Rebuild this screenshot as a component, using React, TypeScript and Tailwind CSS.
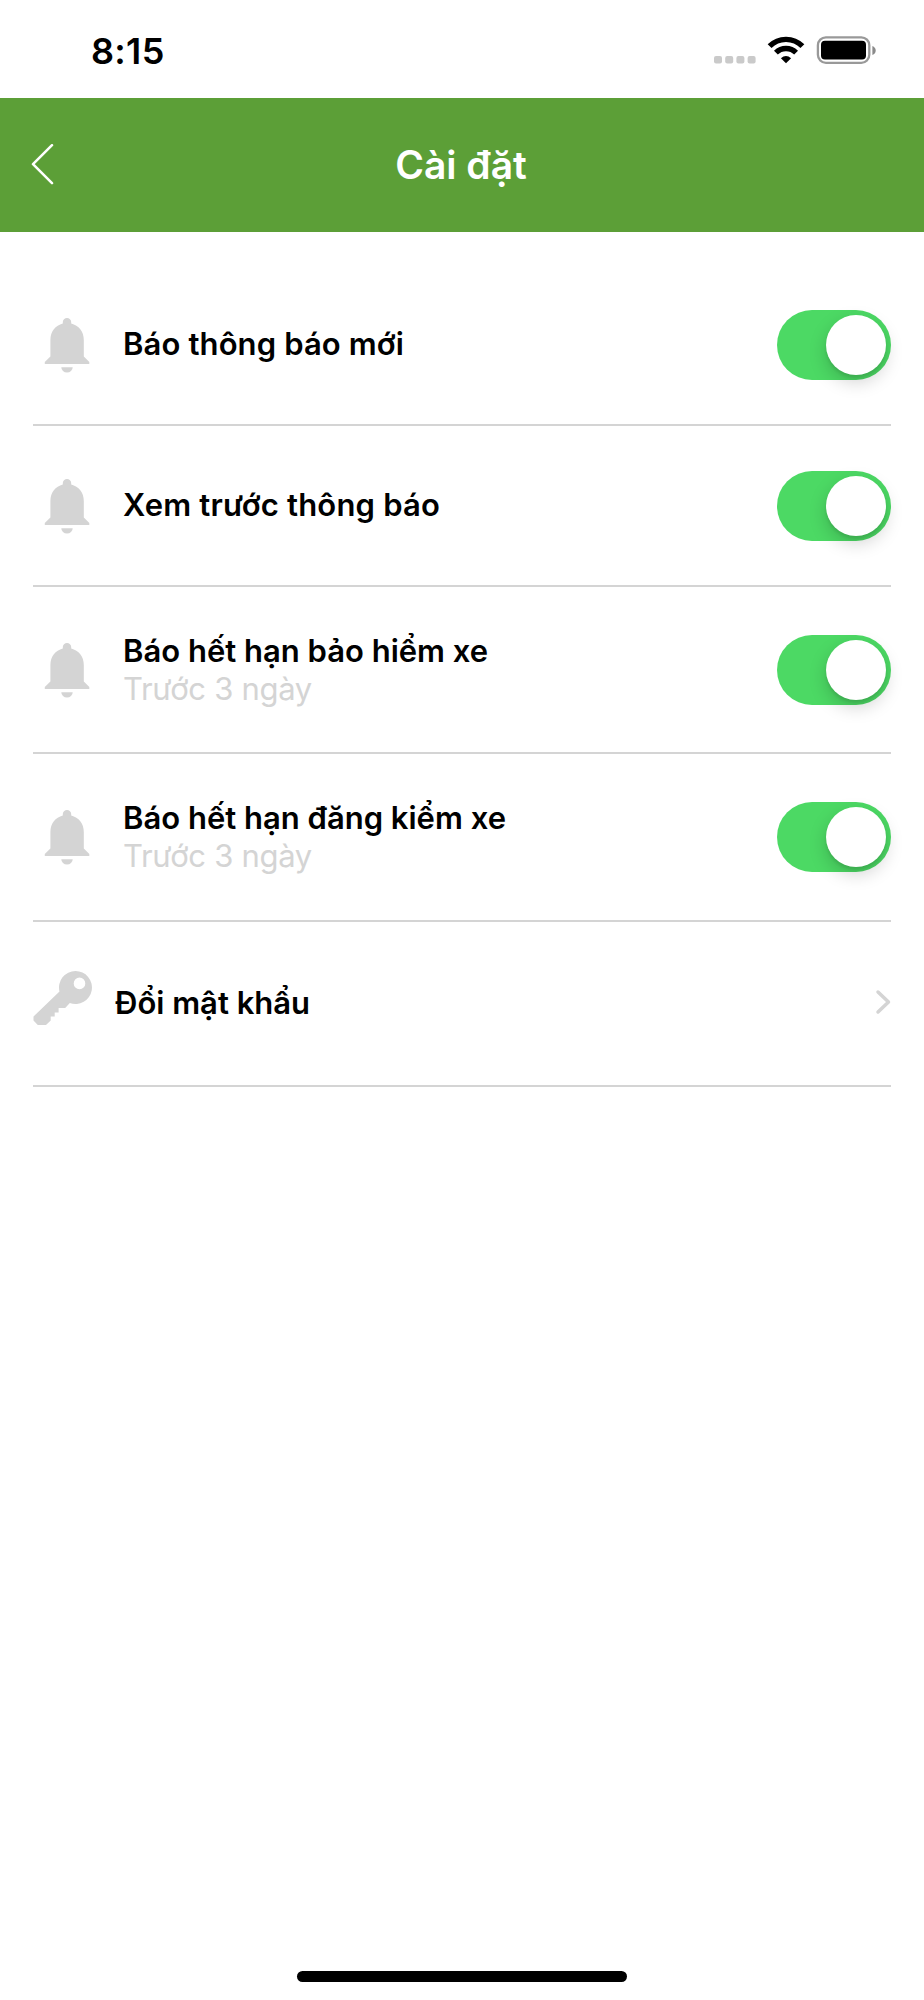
import React, { useState } from 'react'
import clsx from 'clsx'

interface Setting {
  id: string
  title: string
  note?: string
  titleClass: string
  rowClass: string
}

const settings: Setting[] = [
  {
    id: 'new',
    title: 'Báo thông báo mới',
    titleClass: 'tracking-[0.12px] -mt-0.5',
    rowClass: 'h-[161px]',
  },
  {
    id: 'preview',
    title: 'Xem trước thông báo',
    titleClass: 'tracking-[0.2px] -mt-0.5',
    rowClass: 'h-[161px]',
  },
  {
    id: 'insurance',
    title: 'Báo hết hạn bảo hiểm xe',
    note: 'Trước 3 ngày',
    titleClass: 'tracking-normal',
    rowClass: 'h-[167px]',
  },
  {
    id: 'registration',
    title: 'Báo hết hạn đăng kiểm xe',
    note: 'Trước 3 ngày',
    titleClass: 'tracking-normal',
    rowClass: 'h-[168px]',
  },
]

function StatusBar() {
  return (
    <div className="flex h-[98px] shrink-0 items-start justify-between pl-[91px] pr-[48px]">
      <span className="mt-[29px] text-[36px] leading-[44px] font-semibold tracking-[0.3px] text-black">8:15</span>
      <svg className="mt-[34px]" width="163" height="32" viewBox="0 0 163 32">
        {/* Signal dots */}
        <g fill="#cacaca">
          <rect x="1" y="22" width="8" height="7.5" rx="2" />
          <rect x="12.2" y="22" width="8" height="7.5" rx="2" />
          <rect x="23.4" y="22" width="8" height="7.5" rx="2" />
          <rect x="34.6" y="22" width="8" height="7.5" rx="2" />
        </g>
        {/* Wifi */}
        <g fill="none" stroke="#000" strokeWidth="5.4">
          <path d="M56.6 12.2 A23 23 0 0 1 89.4 12.2" />
          <path d="M62.9 18.7 A14.3 14.3 0 0 1 83.1 18.7" />
        </g>
        <path d="M73 29.3 L67.9 24.2 Q73 19.8 78.1 24.2 Z" fill="#000" />
        {/* Battery */}
        <rect x="104.9" y="3.3" width="51.4" height="25.5" rx="8" fill="none" stroke="#999" strokeWidth="2.3" />
        <rect x="108" y="6.8" width="45" height="18.8" rx="4" fill="#000" />
        <path d="M159.4 12 V21 Q162.7 19.5 162.7 16.5 Q162.7 13.5 159.4 12 Z" fill="#8a8a8a" />
      </svg>
    </div>
  )
}

function Header() {
  return (
    <header className="grid h-[134px] shrink-0 grid-cols-[1fr_auto_1fr] items-center bg-[#5c9f37] pr-0.5 text-white">
      <button aria-label="Quay lại" className="pl-[31px]">
        <svg width="24" height="42" viewBox="0 0 24 42" fill="none" stroke="currentColor" strokeWidth="2.5" strokeLinecap="round" strokeLinejoin="round">
          <path d="M21 1.2 L2 20.2 L21 39.2" />
        </svg>
      </button>
      <h1 className="text-[39px] leading-[50px] font-semibold">Cài đặt</h1>
    </header>
  )
}

function BellIcon() {
  return (
    <svg className="ml-[11px] shrink-0" width="46" height="56" viewBox="0 0 46 56" fill="#d4d4d4">
      <path d="M18.8 5.2 A4.2 4.2 0 0 1 27.2 5.2 V6.6 C34.7 8.6 39.8 14.6 39.8 23.1 V39.6 L45.3 44.9 V47.1 H0.8 V44.9 L6.4 39.6 V23.1 C6.4 14.6 11.5 8.6 18.8 6.6 Z" />
      <path d="M17.3 50.2 H28.7 A5.7 5.4 0 0 1 17.3 50.2 Z" />
    </svg>
  )
}

function KeyIcon() {
  return (
    <svg className="-mt-[11px] shrink-0" width="60" height="56" viewBox="0 0 60 56" fill="#d4d4d4">
      <path
        fillRule="evenodd"
        d="M42.5 1 A16.5 16.5 0 1 1 36.8 33 L32.2 38 H25.6 V42.6 H21.7 V46.6 H17.7 V50.5 L13 55 H4.8 L0.5 50.6 V46.5 L26.5 21.5 A16.5 16.5 0 0 1 42.5 1 Z M46.5 7.6 A5.8 5.8 0 1 0 46.5 19.2 A5.8 5.8 0 1 0 46.5 7.6 Z"
      />
    </svg>
  )
}

function Switch({ on, label, onToggle }: { on: boolean; label: string; onToggle: () => void }) {
  return (
    <button
      role="switch"
      aria-checked={on}
      aria-label={label}
      onClick={onToggle}
      className={clsx(
        'flex h-[70px] w-[114px] shrink-0 items-center rounded-full px-[5px]',
        on ? 'justify-end bg-[#4cd964]' : 'justify-start bg-[#e5e5e5]'
      )}
    >
      <span className="size-[60px] rounded-full bg-white shadow-[0_7px_18px_rgba(0,0,0,0.18),0_3px_3px_rgba(0,0,0,0.08)]" />
    </button>
  )
}

export default function App() {
  const [enabled, setEnabled] = useState<Record<string, boolean>>({
    new: true,
    preview: true,
    insurance: true,
    registration: true,
  })

  const toggle = (id: string) => setEnabled((prev) => ({ ...prev, [id]: !prev[id] }))

  return (
    <div className="flex h-[2000px] w-[924px] flex-col bg-white font-['Inter','Liberation_Sans',sans-serif]">
      <StatusBar />
      <Header />

      <main className="flex flex-1 flex-col px-[33px] pt-[33px]">
        {settings.map((item) => (
          <div key={item.id} className={clsx('flex items-center border-b-2 border-[#d4d4d4]', item.rowClass)}>
            <BellIcon />
            <div className="ml-[33px] flex-1 whitespace-nowrap">
              <div className={clsx('text-[31px] leading-[38px] font-semibold text-black', item.titleClass)}>
                {item.title}
              </div>
              {item.note && (
                <div className="text-[31px] leading-[38px] tracking-[-0.3px] text-[#d4d4d4]">{item.note}</div>
              )}
            </div>
            <Switch on={enabled[item.id]} label={item.title} onToggle={() => toggle(item.id)} />
          </div>
        ))}

        {/* Change password */}
        <div className="flex h-[165px] items-center border-b-2 border-[#d4d4d4]">
          <KeyIcon />
          <div className="-mt-0.5 ml-[22px] flex-1 text-[31px] leading-[38px] font-semibold text-black">Đổi mật khẩu</div>
          <svg className="-mt-[3px]" width="16" height="26" viewBox="0 0 16 26" fill="none" stroke="#d4d4d4" strokeWidth="3.5" strokeLinecap="round" strokeLinejoin="round">
            <path d="M3 3 L13.5 13 L3 23" />
          </svg>
        </div>
      </main>

      <div className="mb-[18px] h-[11px] w-[330px] shrink-0 self-center rounded-full bg-black" />
    </div>
  )
}
